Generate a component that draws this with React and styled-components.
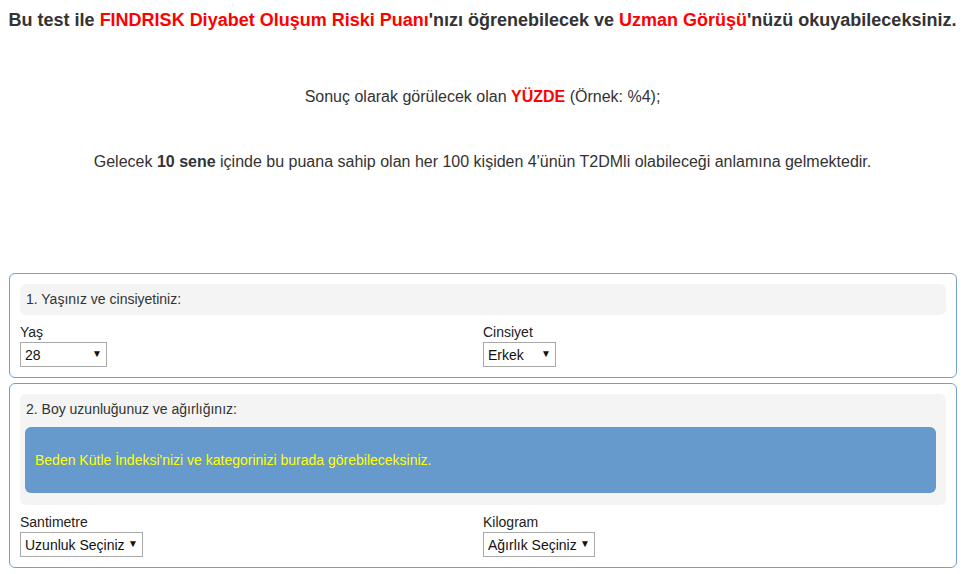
import React from "react";
import styled, { createGlobalStyle } from "styled-components";

const GlobalStyle = createGlobalStyle`
  body {
    margin: 8px;
    background: #ffffff;
    font-family: "Liberation Sans", Arial, sans-serif;
    color: #333333;
  }
`;

const App = () => {
  return (
    <>
      <GlobalStyle />
      <Page>
        <Title>
          Bu test ile <Red>FINDRISK Diyabet Oluşum Riski Puanı</Red>'nızı
          öğrenebilecek ve <Red>Uzman Görüşü</Red>'nüzü okuyabileceksiniz.
        </Title>
        <Info>
          Sonuç olarak görülecek olan <RedBold>YÜZDE</RedBold> (Örnek: %4);
        </Info>
        <Info $gap={45}>
          Gelecek <b>10 sene</b> içinde bu puana sahip olan her 100 kişiden
          4'ünün T2DMli olabileceği anlamına gelmektedir.
        </Info>

        <Panels>
          <Panel>
            <Question>
              <QText>1. Yaşınız ve cinsiyetiniz:</QText>
            </Question>
            <Fields>
              <Field>
                <Label>Yaş</Label>
                <SelectBox $width={87}>
                  <SelectInput defaultValue="28">
                    <option value="28">28</option>
                  </SelectInput>
                  <Arrow>▼</Arrow>
                </SelectBox>
              </Field>
              <Field>
                <Label>Cinsiyet</Label>
                <SelectBox $width={73}>
                  <SelectInput defaultValue="Erkek">
                    <option value="Erkek">Erkek</option>
                    <option value="Kadın">Kadın</option>
                  </SelectInput>
                  <Arrow>▼</Arrow>
                </SelectBox>
              </Field>
            </Fields>
          </Panel>

          <Panel>
            <Question>
              <QText>2. Boy uzunluğunuz ve ağırlığınız:</QText>
              <Notice>
                Beden Kütle İndeksi'nizi ve kategorinizi burada
                görebileceksiniz.
              </Notice>
            </Question>
            <Fields>
              <Field>
                <Label>Santimetre</Label>
                <SelectBox $width={123}>
                  <SelectInput defaultValue="">
                    <option value="">Uzunluk Seçiniz</option>
                  </SelectInput>
                  <Arrow>▼</Arrow>
                </SelectBox>
              </Field>
              <Field>
                <Label>Kilogram</Label>
                <SelectBox $width={112}>
                  <SelectInput defaultValue="">
                    <option value="">Ağırlık Seçiniz</option>
                  </SelectInput>
                  <Arrow>▼</Arrow>
                </SelectBox>
              </Field>
            </Fields>
          </Panel>
        </Panels>
      </Page>
    </>
  );
};

export default App;

const Page = styled.div`
  display: flex;
  flex-direction: column;
`;

const Title = styled.div`
  text-align: center;
  font-weight: bold;
  font-size: 18px;
  line-height: 24px;
  color: #333333;
`;

const Red = styled.span`
  color: #ff0000;
`;

const RedBold = styled.b`
  color: #ff0000;
`;

const Info = styled.p`
  margin: ${(p) => p.$gap || 55}px 0 0;
  text-align: center;
  font-size: 16px;
  line-height: 20px;
  color: #333333;

  b {
    font-weight: bold;
  }
`;

const Panels = styled.div`
  margin-top: 101px;
  padding-left: 1px;
  display: flex;
  flex-direction: column;
  gap: 5px;
`;

const Panel = styled.div`
  border: 1px solid #6f9fd4;
  border-radius: 6px;
  padding: 10px;
  display: flex;
  flex-direction: column;
`;

const Question = styled.div`
  background: #f4f4f4;
  border-radius: 6px;
  padding: 7px 10px 7px 6px;
  display: flex;
  flex-direction: column;
  gap: 9px;
`;

const QText = styled.div`
  font-size: 14px;
  line-height: 17px;
  color: #333333;
`;

const Notice = styled.div`
  margin: 0 0 5px -1px;
  background: #6699cc;
  border-radius: 6px;
  height: 66px;
  padding: 0 10px;
  display: flex;
  align-items: center;
  font-size: 14px;
  color: #ffff00;
`;

const Fields = styled.div`
  display: grid;
  grid-template-columns: 1fr 1fr;
  margin-top: 9px;
`;

const Field = styled.div`
  display: flex;
  flex-direction: column;
  align-items: flex-start;
`;

const Label = styled.label`
  font-size: 14px;
  line-height: 17px;
  color: #222222;
  margin-bottom: 1px;
`;

const SelectBox = styled.div`
  position: relative;
  width: ${(p) => p.$width}px;
  height: 25px;
`;

const SelectInput = styled.select`
  appearance: none;
  width: 100%;
  height: 100%;
  box-sizing: border-box;
  border: 1px solid #a9a9a9;
  border-radius: 0;
  background: #ffffff;
  padding: 0 16px 0 4px;
  font-family: "Liberation Sans", Arial, sans-serif;
  font-size: 14px;
  color: #111111;
  outline: none;
`;

const Arrow = styled.span`
  position: absolute;
  right: 5px;
  top: 7px;
  font-size: 10px;
  line-height: 10px;
  color: #111111;
  pointer-events: none;
`;
